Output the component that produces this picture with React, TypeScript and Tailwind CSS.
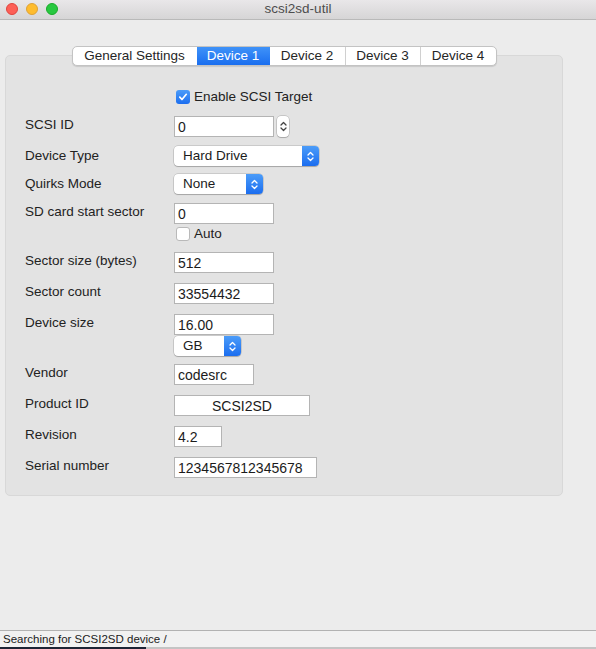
import type { ReactNode } from "react";

const tabs = [
  { label: "General Settings", w: "w-[124px]" },
  { label: "Device 1", w: "w-[73px]", active: true },
  { label: "Device 2", w: "w-[75px]" },
  { label: "Device 3", w: "w-[75px]" },
  { label: "Device 4", w: "w-[76px]" },
];

function UpDown() {
  return (
    <svg
      width="7"
      height="11"
      viewBox="0 0 7 11"
      fill="none"
      stroke="currentColor"
      strokeWidth="1.3"
      strokeLinecap="round"
      strokeLinejoin="round"
    >
      <path d="M1 4 3.5 1.5 6 4" />
      <path d="M1 7 3.5 9.5 6 7" />
    </svg>
  );
}

function Field({
  value,
  width,
  center,
}: {
  value: string;
  width: string;
  center?: boolean;
}) {
  return (
    <div
      className={`flex h-[21px] items-center border border-[#b4b4b4] bg-white px-[3px] pt-[1px] text-[14px] text-[#1b1b1b] ${width} ${
        center ? "justify-center" : ""
      }`}
    >
      {value}
    </div>
  );
}

function Popup({ value, width }: { value: string; width: string }) {
  return (
    <div
      className={`flex h-[20px] rounded-[4px] bg-white shadow-[0_0_0_0.5px_rgba(0,0,0,0.22),0_1px_1px_rgba(0,0,0,0.18)] ${width}`}
    >
      <span className="flex-1 pl-[9px] text-[13.5px] leading-[20px] text-[#1b1b1b]">
        {value}
      </span>
      <span className="flex w-[17px] items-center justify-center rounded-r-[4px] bg-gradient-to-b from-[#4b9cf9] to-[#1b6def] text-white">
        <UpDown />
      </span>
    </div>
  );
}

function Row({
  label,
  mt,
  pt = "pt-[1px]",
  children,
}: {
  label: string;
  mt: string;
  pt?: string;
  children: ReactNode;
}) {
  return (
    <div className={`flex items-start ${mt}`}>
      <div className={`w-[149px] text-[13.5px] leading-[16px] text-[#222] ${pt}`}>
        {label}
      </div>
      <div className="flex flex-col items-start">{children}</div>
    </div>
  );
}

export default function App() {
  return (
    <div className="flex h-[649px] w-[596px] flex-col overflow-hidden bg-[#ececec] font-['Liberation_Sans',Arial,sans-serif]">
      {/* title bar */}
      <div className="relative flex h-[20px] shrink-0 items-center justify-center border-b border-[#b9b9b9] bg-gradient-to-b from-[#e9e7e9] to-[#d6d5d6]">
        <div className="absolute left-[6px] top-[3px] flex gap-[8px]">
          <span className="h-[12px] w-[12px] rounded-full border border-[#e0443e] bg-[#fd5f57]" />
          <span className="h-[12px] w-[12px] rounded-full border border-[#dea236] bg-[#febc2e]" />
          <span className="h-[12px] w-[12px] rounded-full border border-[#1aab29] bg-[#28c840]" />
        </div>
        <span className="text-[13.5px] text-[#4d4d4d]">scsi2sd-util</span>
      </div>

      <div className="flex flex-1 flex-col">
        {/* tab strip */}
        <div className="relative z-10 mt-[26px] flex justify-center pr-[28px]">
          <div className="flex h-[20px] overflow-hidden rounded-[5px] border border-[#c3c3c3] bg-white shadow-[0_1px_1px_rgba(0,0,0,0.12)]">
            {tabs.map((t, i) => (
              <div
                key={t.label}
                className={`flex items-center justify-center text-[13.5px] ${t.w} ${
                  t.active
                    ? "bg-gradient-to-b from-[#3f92f8] to-[#1a6eef] text-white"
                    : "text-[#262626]"
                } ${i > 0 && !t.active && !tabs[i - 1].active ? "border-l border-[#d0d0d0]" : ""}`}
              >
                {t.label}
              </div>
            ))}
          </div>
        </div>

        {/* device settings group */}
        <div className="-mt-[11px] ml-[5px] w-[558px] rounded-[5px] border border-[#d8d8d8] bg-[#e3e3e3] pb-[17px] pl-[19px] pt-[33px]">
          <div className="flex items-center pl-[151px]">
            <span className="flex h-[14px] w-[14px] items-center justify-center rounded-[3px] bg-gradient-to-b from-[#4b9cf9] to-[#1b6def] text-white">
              <svg width="10" height="10" viewBox="0 0 10 10" fill="none">
                <path
                  d="M1.8 5.2 4 7.5 8.3 2.3"
                  stroke="currentColor"
                  strokeWidth="1.7"
                  strokeLinecap="round"
                  strokeLinejoin="round"
                />
              </svg>
            </span>
            <span className="ml-[4px] text-[13.5px] leading-[16px] text-[#222]">
              Enable SCSI Target
            </span>
          </div>

          <Row label="SCSI ID" mt="mt-[11px]">
            <div className="flex items-start">
              <Field value="0" width="w-[100px]" />
              <span className="ml-[3px] flex h-[21px] w-[12px] items-center justify-center rounded-[4px] bg-white text-[#444] shadow-[0_0_0_0.5px_rgba(0,0,0,0.25),0_1px_1px_rgba(0,0,0,0.15)]">
                <UpDown />
              </span>
            </div>
          </Row>

          <Row label="Device Type" mt="mt-[9px]" pt="pt-[2px]">
            <Popup value="Hard Drive" width="w-[145px]" />
          </Row>

          <Row label="Quirks Mode" mt="mt-[8px]" pt="pt-[2px]">
            <Popup value="None" width="w-[89px]" />
          </Row>

          <Row label="SD card start sector" mt="mt-[9px]">
            <Field value="0" width="w-[100px]" />
            <div className="ml-[2px] mt-[3px] flex items-center">
              <span className="h-[14px] w-[14px] rounded-[3px] border border-[#b9b9b9] bg-white" />
              <span className="ml-[4px] text-[13.5px] leading-[14px] text-[#222]">Auto</span>
            </div>
          </Row>

          <Row label="Sector size (bytes)" mt="mt-[11px]">
            <Field value="512" width="w-[100px]" />
          </Row>

          <Row label="Sector count" mt="mt-[10px]">
            <Field value="33554432" width="w-[100px]" />
          </Row>

          <Row label="Device size" mt="mt-[10px]">
            <Field value="16.00" width="w-[100px]" />
            <div className="mt-[1px]">
              <Popup value="GB" width="w-[67px]" />
            </div>
          </Row>

          <Row label="Vendor" mt="mt-[8px]">
            <Field value="codesrc" width="w-[80px]" />
          </Row>

          <Row label="Product ID" mt="mt-[10px]">
            <Field value="SCSI2SD" width="w-[136px]" center />
          </Row>

          <Row label="Revision" mt="mt-[10px]">
            <Field value="4.2" width="w-[48px]" />
          </Row>

          <Row label="Serial number" mt="mt-[10px]">
            <Field value="1234567812345678" width="w-[143px]" />
          </Row>
        </div>
      </div>

      {/* status bar */}
      <div className="flex h-[19px] shrink-0 flex-col border-t border-[#b2b2b2] bg-[#f1f1f1]">
        <div className="flex-1 pl-[3px] text-[11.5px] leading-[16px] text-[#1b1b1b]">
          Searching for SCSI2SD device /
        </div>
        <div className="flex h-[2px]">
          <div className="w-[146px] bg-[#1d2434]" />
          <div className="flex-1 bg-[#c4c4c4]" />
        </div>
      </div>
    </div>
  );
}
